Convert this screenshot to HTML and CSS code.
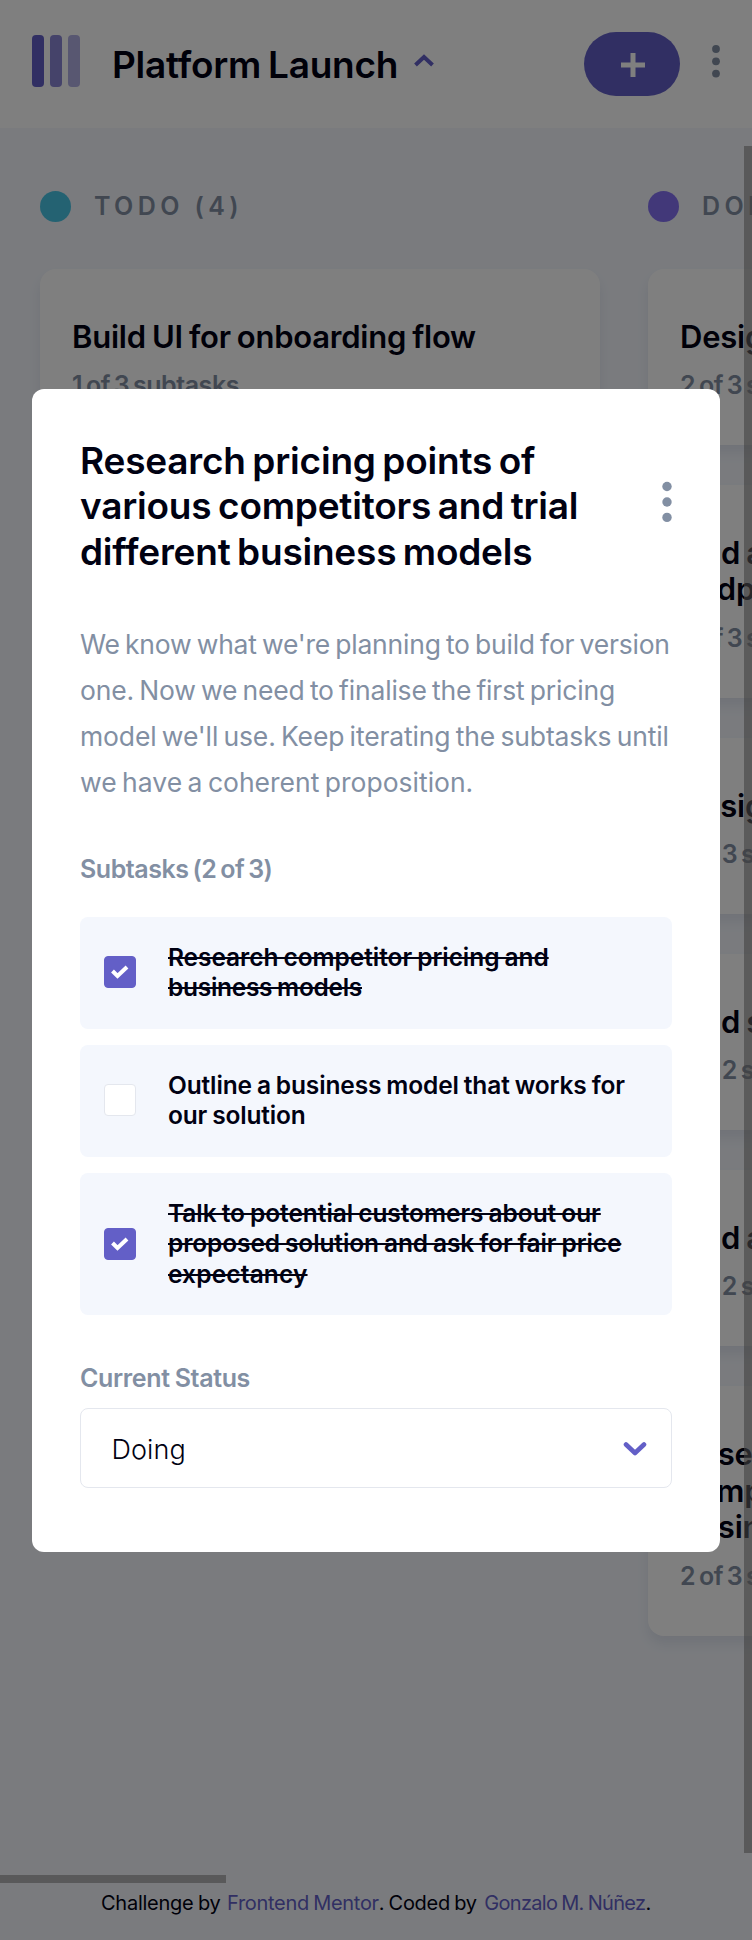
FILE: index.html
```
<!DOCTYPE html>
<html lang="en">
<head>
<meta charset="utf-8">
<title>Kanban</title>
<link rel="stylesheet" href="styles.css">
</head>
<body>
<div class="page">
  <header class="topbar">
    <svg class="logo" width="48" height="52" viewBox="0 0 48 52" fill="#635fc7"><rect width="12" height="52" rx="4"/><rect x="18" width="12" height="52" rx="4" opacity=".75"/><rect x="36" width="12" height="52" rx="4" opacity=".5"/></svg>
    <h1 class="board-name"><span class="a1">Platform Launch</span></h1>
    <svg class="caret" width="20" height="13" viewBox="0 0 20 13" fill="none" stroke="#635fc7" stroke-width="4"><path d="M1.500 11 10 3 18.500 11"/></svg>
    <button class="add" aria-label="Add task"><svg width="24" height="24" viewBox="0 0 24 24" fill="#fff"><path d="M9.500 0h5v9.500H24v5h-9.500V24h-5v-9.500H0v-5h9.500z"/></svg></button>
    <svg class="menu" width="8" height="33" viewBox="0 0 8 33" fill="#828fa3"><circle cx="4" cy="4" r="3.900"/><circle cx="4" cy="16.300" r="3.900"/><circle cx="4" cy="28.600" r="3.900"/></svg>
  </header>
  <main class="board">
    <section class="column">
      <h2 class="column-head"><i class="dot todo"></i><span class="a2">TODO (4)</span></h2>
      <article class="card"><h3><span class="a3">Build UI for onboarding flow</span></h3><p><span class="a4">1 of 3 subtasks</span></p></article>
    </section>
    <section class="column">
      <h2 class="column-head"><i class="dot doing"></i><span>DOING (6)</span></h2>
      <article class="card"><h3>Design settings and search</h3><p>2 of 3 subtasks</p></article>
      <article class="card"><h3>Add account management<br>endpoints</h3><p>2 of 3 subtasks</p></article>
      <article class="card"><h3>Design onboarding flow</h3><p>1 of 3 subtasks</p></article>
      <article class="card"><h3>Add search endpoints</h3><p>1 of 2 subtasks</p></article>
      <article class="card"><h3>Add authentication endpoints</h3><p>1 of 2 subtasks</p></article>
      <article class="card"><h3>Research pricing points of<br>competitors and trial<br>business models</h3><p>2 of 3 subtasks</p></article>
    </section>
    <div class="bar-y"></div>
    <div class="bar-x"></div>
  </main>
  <footer class="credit"><span class="b1">Challenge by</span><a class="b2">Frontend Mentor</a><span class="b3">. Coded by</span><a class="b4">Gonzalo M. Núñez</a><span>.</span></footer>
</div>
<div class="overlay">
  <div class="modal">
    <div class="modal-head">
      <h2><span class="c1">Research pricing points of</span><br><span class="c2">various competitors and trial</span><br><span class="c3">different business models</span></h2>
      <svg class="modal-menu" width="10" height="42" viewBox="0 0 10 42" fill="#828fa3"><circle cx="5" cy="5.500" r="4.700"/><circle cx="5" cy="21" r="4.700"/><circle cx="5" cy="36.400" r="4.700"/></svg>
    </div>
    <p class="desc"><span class="d1">We know what we're planning to build for version</span><br><span class="d2">one. Now we need to finalise the first pricing</span><br><span class="d3">model we'll use. Keep iterating the subtasks until</span><br><span class="d4">we have a coherent proposition.</span></p>
    <h3 class="label"><span class="e1">Subtasks (2 of 3)</span></h3>
    <ul class="subtasks">
      <li class="done"><span class="box"><svg width="18" height="14" viewBox="0 0 18 14" fill="none" stroke="#fff" stroke-width="4"><path d="M1.500 6 6.500 11 16 2"/></svg></span><p><span class="f1">Research competitor pricing and</span><br><span class="f2">business models</span></p></li>
      <li><span class="box"></span><p><span class="f3">Outline a business model that works for</span><br><span class="f4">our solution</span></p></li>
      <li class="done"><span class="box"><svg width="18" height="14" viewBox="0 0 18 14" fill="none" stroke="#fff" stroke-width="4"><path d="M1.500 6 6.500 11 16 2"/></svg></span><p><span class="f5">Talk to potential customers about our</span><br><span class="f6">proposed solution and ask for fair price</span><br><span class="f7">expectancy</span></p></li>
    </ul>
    <h3 class="label status"><span class="e2">Current Status</span></h3>
    <div class="select"><span class="e3">Doing</span><svg width="24" height="16" viewBox="0 0 24 16" fill="none" stroke="#635fc7" stroke-width="4.600" stroke-linecap="round" stroke-linejoin="round"><path d="M3 3.500 12 12 21 3.500"/></svg></div>
  </div>
</div>
</body>
</html>
```
FILE: styles.css
```
* { box-sizing: border-box; margin: 0; padding: 0; }
body { font-family: Inter, "Noto Sans", sans-serif; color: #000112; background: #f4f7fd; }
.page { width: 752px; height: 1940px; overflow: hidden; display: flex; flex-direction: column; }
.topbar { height: 128px; flex: none; background: #fff; display: flex; align-items: center; padding: 0 32px; }
.logo { margin-top: -7px; }
.board-name { margin: 1px 0 0 32px; font-size: 37px; line-height: 46px; font-weight: 600; white-space: nowrap; width: 302px; }
.caret { margin-top: -7px; }
.add { margin-left: auto; width: 96px; height: 64px; flex: none; border: 0; border-radius: 32px; background: #635fc7; display: grid; place-items: center; padding: 1px 0 0 2px; }
.menu { margin: -6px 0 0 32px; flex: none; }
.board { position: relative; height: 1755px; flex: none; overflow: hidden; display: flex; gap: 48px; padding: 62.5px 0 0 40px; }
.column { width: 560px; flex: none; display: flex; flex-direction: column; gap: 40px; }
.column-head { display: flex; align-items: center; gap: 23px; font-size: 25px; line-height: 31px; margin-bottom: 7.5px; font-weight: 600; letter-spacing: 4.4px; color: #828fa3; white-space: nowrap; }
.dot { width: 31px; height: 31px; border-radius: 50%; }
.todo { background: #49c4e5; }
.doing { background: #8471f2; }
.card { background: #fff; border-radius: 16px; padding: 49.600px 32px 44.2px; box-shadow: 0 8px 12px rgba(54, 78, 126, .1); white-space: nowrap; }
.card h3 { font-size: 31px; line-height: 36.8px; font-weight: 600; letter-spacing: -.23px; word-spacing: -1.5px; }
.card p { margin-top: 14.700px; font-size: 25px; line-height: 30.8px; font-weight: 600; color: #828fa3; letter-spacing: -.47px; word-spacing: -2px; }
.bar-y, .bar-x { position: absolute; background: rgba(133, 133, 133, .6); }
.bar-y { right: 0; top: 17.5px; width: 8px; height: 1707.5px; }
.bar-x { left: 0; bottom: 0; width: 226px; height: 8px; }
.credit { display: flex; padding: 7.700px 0 0 101px; font-size: 20px; line-height: 24px; white-space: nowrap; word-spacing: -1px; letter-spacing: -.25px; }
.credit a { color: #635fc7; }
.b1 { margin-right: 6.5px; }
.b2 { letter-spacing: -.3px; }
.b3 { margin-right: 7.5px; letter-spacing: -.3px; }
.b4 { letter-spacing: -.68px; }
.overlay { position: absolute; inset: 0; height: 1940px; background: rgba(0, 0, 0, .5); padding: 389px 32px 0; }
.modal { height: 1163px; background: #fff; border-radius: 12px; padding: 48.500px 48px; white-space: nowrap; }
.modal-head { display: flex; justify-content: space-between; align-items: center; }
.modal-head h2 { font-size: 37px; line-height: 45.6px; font-weight: 600; letter-spacing: -.21px; word-spacing: -2.5px; }
.modal-menu { margin-top: -8.500px; }
.desc { margin-top: 47px; font-size: 26.5px; line-height: 46px; color: #828fa3; word-spacing: -2px; }
.label { margin-top: 49px; font-size: 25px; line-height: 31px; font-weight: 600; color: #828fa3; }
.subtasks { list-style: none; margin-top: 31.500px; display: grid; gap: 16px; }
.subtasks li { display: flex; align-items: center; gap: 32px; padding: 25px 24px 25.6px; background: #f4f7fd; border-radius: 8px; font-size: 24.5px; line-height: 30.7px; font-weight: 600; word-spacing: -1px; }
.box { width: 32px; height: 32px; border: 1px solid #e4e7ee; border-radius: 4px; background: #fff; display: grid; place-items: center; }
.done .box { background: #635fc7; border-color: #635fc7; }
.done p { text-decoration: line-through; }
.label.status { margin-top: 47.500px; }
.select { margin-top: 14px; height: 80px; border: 1.3px solid #e4e7ee; border-radius: 8px; display: flex; align-items: center; justify-content: space-between; padding: 3px 24px 0 30.500px; font-size: 27px; font-weight: 300; }
.a1 { letter-spacing: -.27px; word-spacing: -2px; }
.c3 { letter-spacing: -.22px; }
.d1 { letter-spacing: -.22px; }
.d2 { letter-spacing: -.18px; }
.d3 { letter-spacing: -.14px; }
.e1 { letter-spacing: -.45px; word-spacing: -2px; }
.e2 { letter-spacing: -.35px; word-spacing: -1px; }
.e3 { letter-spacing: .1px; }
.f1, .f5 { letter-spacing: -.06px; }
.f6 { letter-spacing: -.11px; }
.f2 { letter-spacing: -.29px; }
.f3 { letter-spacing: -.14px; }
.f4 { letter-spacing: -.17px; }
.f7 { letter-spacing: .15px; }
```
